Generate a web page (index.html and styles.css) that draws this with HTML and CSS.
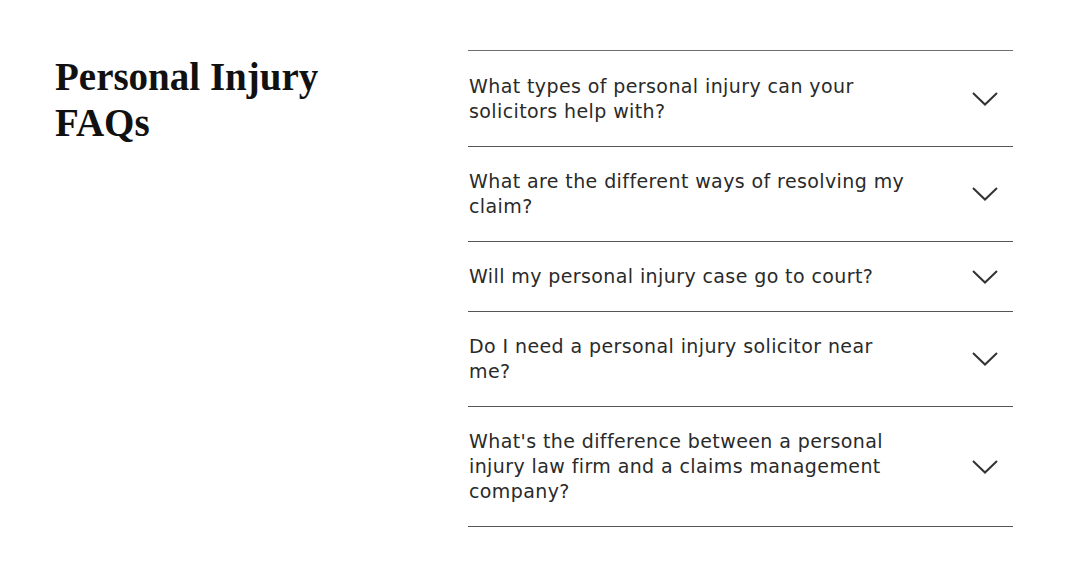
FILE: index.html
```html
<!DOCTYPE html>
<html lang="en">
<head>
<meta charset="utf-8">
<title>Personal Injury FAQs</title>
<link rel="stylesheet" href="styles.css">
</head>
<body>
<section class="faq-section">
  <h2 class="faq-title">Personal Injury<br>FAQs</h2>
  <div class="faq-list">
    <div class="faq-item">
      <span class="faq-q">What types of personal injury can your solicitors help with?</span>
      <svg class="chev" viewBox="0 0 26 14" width="26" height="14"><path d="M1 1 L13 12.5 L25 1" fill="none" stroke="#333" stroke-width="2"/></svg>
    </div>
    <div class="faq-item">
      <span class="faq-q">What are the different ways of resolving my claim?</span>
      <svg class="chev" viewBox="0 0 26 14" width="26" height="14"><path d="M1 1 L13 12.5 L25 1" fill="none" stroke="#333" stroke-width="2"/></svg>
    </div>
    <div class="faq-item">
      <span class="faq-q">Will my personal injury case go to court?</span>
      <svg class="chev" viewBox="0 0 26 14" width="26" height="14"><path d="M1 1 L13 12.5 L25 1" fill="none" stroke="#333" stroke-width="2"/></svg>
    </div>
    <div class="faq-item">
      <span class="faq-q">Do I need a personal injury solicitor near me?</span>
      <svg class="chev" viewBox="0 0 26 14" width="26" height="14"><path d="M1 1 L13 12.5 L25 1" fill="none" stroke="#333" stroke-width="2"/></svg>
    </div>
    <div class="faq-item">
      <span class="faq-q">What's the difference between a personal injury law firm and a claims management company?</span>
      <svg class="chev" viewBox="0 0 26 14" width="26" height="14"><path d="M1 1 L13 12.5 L25 1" fill="none" stroke="#333" stroke-width="2"/></svg>
    </div>
  </div>
</section>
</body>
</html>
```
FILE: styles.css
```css
html, body {
  margin: 0;
  padding: 0;
  background: #fff;
}
.faq-section {
  display: flex;
  padding: 50px 0 0 55px;
}
.faq-title {
  margin: 0;
  width: 413px;
  padding-top: 4px;
  font-family: "Liberation Serif", "Times New Roman", serif;
  font-weight: 700;
  font-size: 39px;
  line-height: 46px;
  color: #111;
}
.faq-list {
  width: 545px;
  border-top: 1px solid #6f6f6f;
}
.faq-item {
  display: flex;
  align-items: center;
  justify-content: space-between;
  padding: 22px 15px 22px 1px;
  border-bottom: 1px solid #555;
}
.faq-item:first-child {
  padding-top: 23px;
}
.faq-q {
  width: 445px;
  font-family: "DejaVu Sans", sans-serif;
  font-size: 19px;
  letter-spacing: 0.4px;
  line-height: 25px;
  color: #2a2a2a;
}
.chev {
  display: block;
  flex: none;
}
```
